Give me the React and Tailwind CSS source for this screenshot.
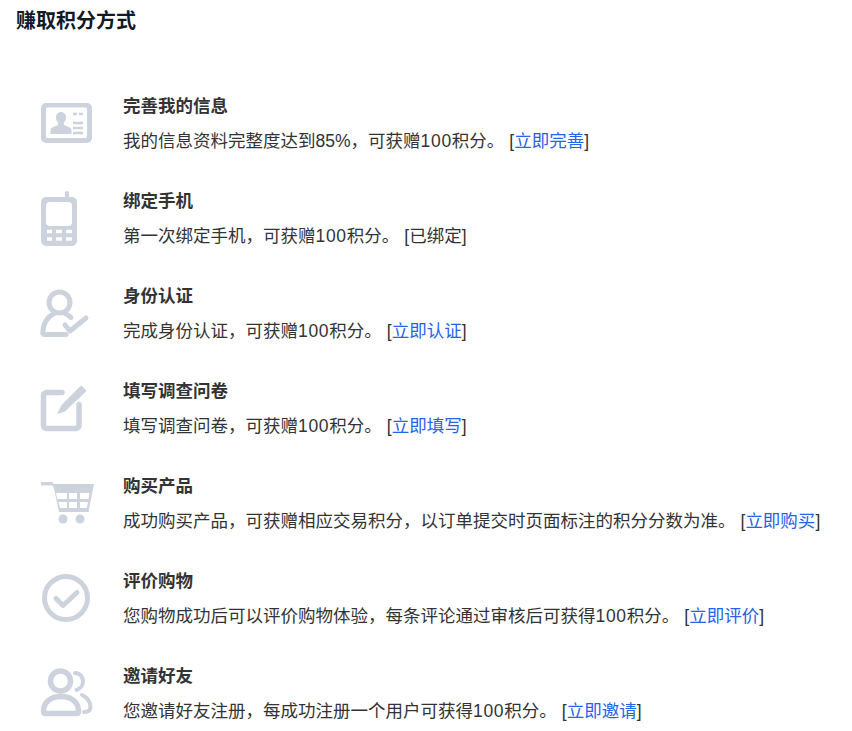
const iconColor = '#cdd3dc'

// icons are drawn on a 64x70 box, one per row
const CardIcon = () => (
  <g>
    <path fillRule="evenodd" fill={iconColor} d="M10 14h41a5 5 0 0 1 5 5v30a5 5 0 0 1-5 5H10a5 5 0 0 1-5-5V19a5 5 0 0 1 5-5zM11.500 18.500a1.500 1.500 0 0 0-1.500 1.500v27.500a1.500 1.500 0 0 0 1.500 1.500h38a1.500 1.500 0 0 0 1.500-1.500V20a1.500 1.500 0 0 0-1.500-1.500z" />
    <path fill={iconColor} d="M25 23c2.900 0 5 2.300 5 5.300 0 2.300-.9 4.300-2.100 5.300v2c0 1 4.300 1.900 6.600 3.500.8.500 1 1.300 1 2.700v3.200H14.500V41.800c0-1.400.2-2.200 1-2.700 2.300-1.600 6.600-2.500 6.600-3.500v-2c-1.200-1-2.100-3-2.100-5.300 0-3 2.100-5.300 5-5.300z" />
    <path stroke={iconColor} strokeWidth="2.500" d="M37 25h4M43 25h4M37 34h10M37 39h10M37 44h10" />
  </g>
)

const PhoneIcon = () => (
  <g>
    <path fill={iconColor} d="M29 9a2 2 0 0 1 4 0v4h3a5 5 0 0 1 5 5v39a5 5 0 0 1-5 5H10a5 5 0 0 1-5-5V18a5 5 0 0 1 5-5h19z" />
    <rect x="10" y="18" width="26" height="24" rx="4" fill="#fff" />
    <path stroke="#fff" strokeWidth="3.500" d="M11 47.500h5M20 47.500h6M30 47.500h6M11 55h5M20 55h6M30 55h6" />
  </g>
)

const UserCheckIcon = () => (
  <g fill="none" stroke={iconColor} strokeWidth="5" strokeLinecap="round" strokeLinejoin="round">
    <circle cx="23.500" cy="23.500" r="10.500" />
    <path d="M30 55.500H9c-2 0-2.500-1-2.200-3C7.500 45 11 38 18 34.500M29 34.500c2.500 1 4.500 2.500 6 4" />
    <path d="M29 46l5 6 16-13" />
  </g>
)

const EditIcon = () => (
  <g>
    <path fill="none" stroke={iconColor} strokeWidth="5.500" strokeLinecap="round" strokeLinejoin="round" d="M26 18.500H10.500a3 3 0 0 0-3 3V51.500a3 3 0 0 0 3 3H40a3 3 0 0 0 3-3V30.500" />
    <path fill={iconColor} d="M21 40l4.500-9L44 12.500c.8-.8 1.800-.8 2.500 0l3 3c.7.700.7 1.700 0 2.500L29 37.500z" />
  </g>
)

const CartIcon = () => (
  <g>
    <path fill={iconColor} d="M5 13h10.500c1 0 1.500.4 1.800 1.200l.3.800H58l-5.500 28H23l-5-23.500-1.300-3H6.500c-1 0-1.500-.6-1.500-1.500z" />
    <path fill="#fff" d="M20 24h11v6H21.300zM33 24h8v6h-8zM44 24h9.500l-1 6H44zM22.500 33H31v6h-6.800zM33 33h8v6h-8zM44 33h8l-1.300 6H44z" />
    <circle cx="27" cy="50" r="4.500" fill={iconColor} />
    <circle cx="44" cy="50" r="4.500" fill={iconColor} />
  </g>
)

const CheckCircleIcon = () => (
  <g fill="none" stroke={iconColor} strokeWidth="5" strokeLinecap="round" strokeLinejoin="round">
    <circle cx="30" cy="34" r="21.500" />
    <path d="M20 34.500l7 7 14-13" />
  </g>
)

const UsersIcon = () => (
  <g fill="none" stroke={iconColor} strokeLinecap="round" strokeLinejoin="round">
    <circle cx="24.500" cy="22" r="10" strokeWidth="5.500" />
    <path strokeWidth="5.500" d="M9.500 54.500c-1.500 0-2-.7-2-2.500 0-9 7.500-14.500 17.500-14.500S42.500 43 42.500 52c0 1.800-.5 2.500-2 2.500z" />
    <path strokeWidth="4" d="M39 14c5 0 8 4 8 8.500 0 4-3 7.500-6.500 8.500M46 36c5 2 8.500 7 8.500 12 0 3-2 5-6.500 5" />
  </g>
)

const items = [
  { title: '完善我的信息', desc: '我的信息资料完整度达到85%，可获赠100积分。', action: '立即完善', link: true, icon: <CardIcon /> },
  { title: '绑定手机', desc: '第一次绑定手机，可获赠100积分。', action: '已绑定', link: false, icon: <PhoneIcon /> },
  { title: '身份认证', desc: '完成身份认证，可获赠100积分。', action: '立即认证', link: true, icon: <UserCheckIcon /> },
  { title: '填写调查问卷', desc: '填写调查问卷，可获赠100积分。', action: '立即填写', link: true, icon: <EditIcon /> },
  { title: '购买产品', desc: '成功购买产品，可获赠相应交易积分，以订单提交时页面标注的积分分数为准。', action: '立即购买', link: true, icon: <CartIcon /> },
  { title: '评价购物', desc: '您购物成功后可以评价购物体验，每条评论通过审核后可获得100积分。', action: '立即评价', link: true, icon: <CheckCircleIcon /> },
  { title: '邀请好友', desc: '您邀请好友注册，每成功注册一个用户可获得100积分。', action: '立即邀请', link: true, icon: <UsersIcon /> },
]

// the 100 runs a little wider in the reference font
const Desc = ({ text }) => text.split(/(100)/).map((part, i) =>
  i % 2 ? <span key={i} className="tracking-[0.7px]">{part}</span> : part
)

const App = () => {
  return (
    <div className="w-[852px] h-[731px] overflow-hidden bg-white font-['Liberation_Sans','Noto_Sans_CJK_SC',sans-serif]">
      <h2 className="pl-4 pt-[7px] h-[89px] text-[20px] leading-[28px] font-bold text-[#111827]">赚取积分方式</h2>

      <div className="flex flex-col gap-[25px] pl-9">
        {items.map((item) => (
          <div key={item.title} className="flex gap-[23px] h-[70px]">
            <svg className="w-16 h-[70px] shrink-0" viewBox="0 0 64 70">
              {item.icon}
            </svg>
            <div className="text-[17.5px] leading-[35px] whitespace-nowrap text-[#333333]">
              <p className="font-bold">{item.title}</p>
              <p>
                <Desc text={item.desc} />
                <span className="ml-[5px]">
                  [{item.link ? <a href="#" className="text-[#2563eb]">{item.action}</a> : item.action}]
                </span>
              </p>
            </div>
          </div>
        ))}
      </div>
    </div>
  )
}

export default App
